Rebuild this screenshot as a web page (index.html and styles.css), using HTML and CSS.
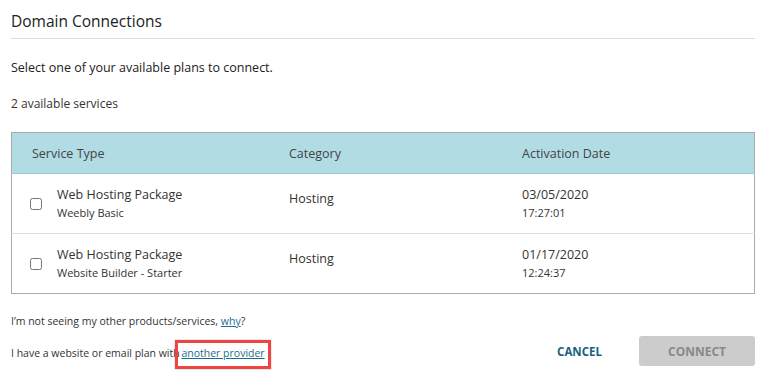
FILE: index.html
```html
<!DOCTYPE html>
<html lang="en">
<head>
    <meta charset="UTF-8">
    <meta name="viewport" content="width=device-width, initial-scale=1.0">
    <title>Domain Connections</title>
    <link rel="stylesheet" href="styles.css">
</head>
<body>
    <div class="panel">
        <h1 class="title">Domain Connections</h1>
        <p class="intro">Select one of your available plans to connect.</p>
        <p class="count">2 available services</p>
        <table class="services">
            <thead>
                <tr>
                    <th class="col_type">Service Type</th>
                    <th class="col_cat">Category</th>
                    <th>Activation Date</th>
                </tr>
            </thead>
            <tbody>
                <tr>
                    <td>
                        <label class="pick">
                            <input type="checkbox">
                            <span class="name">Web Hosting Package<small>Weebly Basic</small></span>
                        </label>
                    </td>
                    <td><span class="cat">Hosting</span></td>
                    <td><span class="date">03/05/2020<small>17:27:01</small></span></td>
                </tr>
                <tr>
                    <td>
                        <label class="pick">
                            <input type="checkbox">
                            <span class="name">Web Hosting Package<small>Website Builder - Starter</small></span>
                        </label>
                    </td>
                    <td><span class="cat">Hosting</span></td>
                    <td><span class="date">01/17/2020<small>12:24:37</small></span></td>
                </tr>
            </tbody>
        </table>
        <div class="footer">
            <div class="notes">
                <p>I’m not seeing my other products/services, <a href="#">why</a>?</p>
                <p>I have a website or email plan with <a href="#" class="marked">another provider</a></p>
            </div>
            <div class="actions">
                <a href="#" class="cancel">CANCEL</a>
                <button class="connect" disabled>CONNECT</button>
            </div>
        </div>
    </div>
</body>
</html>
```

FILE: styles.css
```css
body
{
    margin: 0;
    font-family: "Open Sans", "Noto Sans", sans-serif;
    color: #333;
    background-color: #fff;
}
.panel
{
    width: 744px;
    padding: 10px 0 0 11px;
}
.title
{
    margin: 0;
    padding-bottom: 6px;
    font-size: 15.5px;
    font-weight: 400;
    line-height: 22px;
    color: #222;
    border-bottom: 1px solid #ddd;
}
.intro
{
    margin: 20px 0 0;
    font-size: 12.5px;
    line-height: 18px;
    color: #222;
}
.count
{
    margin: 18px 0 0;
    font-size: 12px;
    line-height: 18px;
}
.services
{
    width: 100%;
    margin-top: 19px;
    border-collapse: collapse;
    border: 1px solid #aaa;
    font-size: 12.5px;
}
.services th
{
    height: 40px;
    padding: 0 0 0 20px;
    text-align: left;
    font-weight: 400;
    color: #444;
    background-color: #b2dce4;
    border-bottom: 1px solid #9cc9d3;
}
.services td
{
    height: 60px;
    padding: 0 0 0 20px;
    vertical-align: top;
    border-top: 1px solid #ddd;
    box-sizing: border-box;
}
.services th.col_type
{
    width: 237px;
}
.services th.col_cat
{
    width: 213px;
}
.services small
{
    display: block;
    margin-top: 2px;
    font-size: 11px;
    line-height: 16px;
}
.pick
{
    display: flex;
    align-items: center;
    margin: 12px 0 0 -2px;
}
.pick input
{
    width: 12px;
    height: 12px;
    margin: 0 15px 0 0;
}
.name,
.date
{
    display: block;
    line-height: 17px;
}
.date
{
    margin-top: 12px;
}
.cat
{
    display: block;
    margin-top: 16px;
    line-height: 17px;
}
.footer
{
    display: flex;
    justify-content: space-between;
    align-items: flex-end;
    margin-top: 18px;
}
.notes p
{
    margin: 0 0 14px;
    font-size: 10.5px;
    line-height: 18px;
    color: #333;
}
.notes a
{
    color: #1a6e8c;
}
.marked
{
    outline: 3px solid #ef4444;
    box-shadow: 0 0 0 4px rgba(0, 0, 0, 0.08);
    padding: 3px 3px 6px;
    margin-left: -4px;
}
.actions
{
    display: flex;
    align-items: center;
    margin-bottom: 10px;
}
.cancel
{
    margin-right: 37px;
    font-size: 11.5px;
    font-weight: 700;
    color: #17637f;
    text-decoration: none;
}
.connect
{
    width: 116px;
    height: 30px;
    border: none;
    border-radius: 3px;
    background-color: #ccc;
    color: #888;
    font-family: inherit;
    font-size: 12px;
    font-weight: 700;
}
```
